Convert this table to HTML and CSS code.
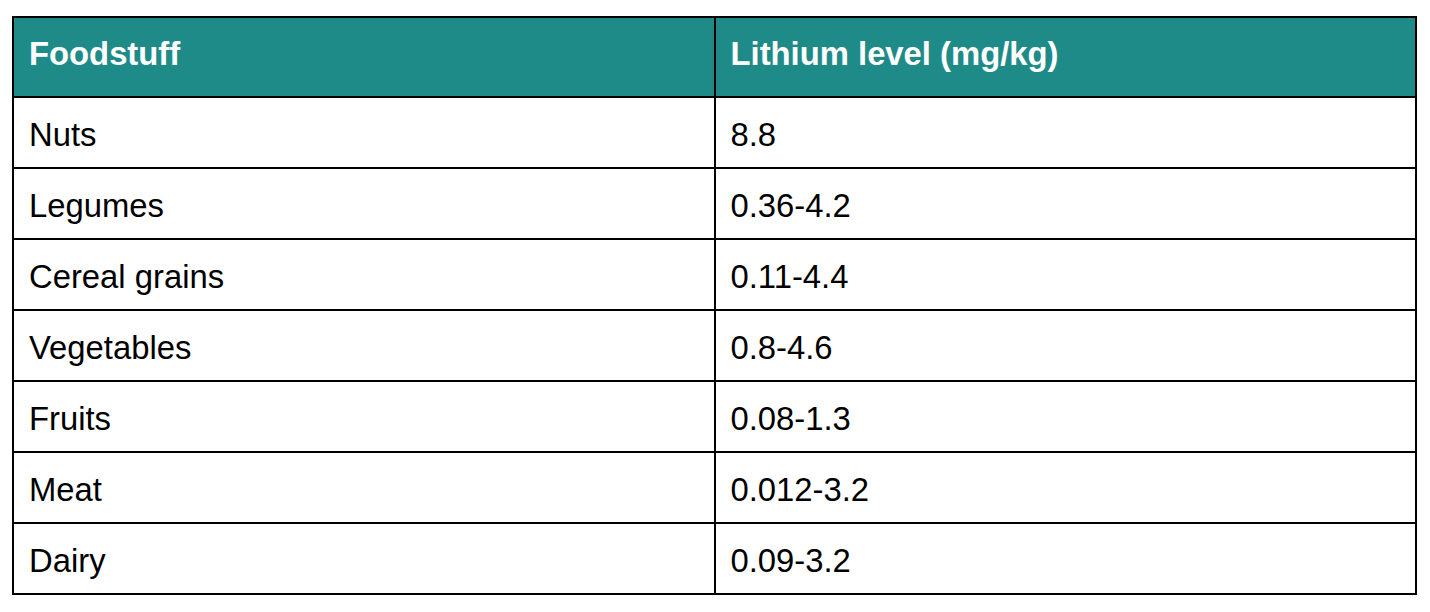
FILE: index.html
```html
<!DOCTYPE html>
<html lang="en">
<head>
    <meta charset="UTF-8">
    <meta name="viewport" content="width=device-width, initial-scale=1.0">
    <title>Lithium levels in food</title>
    <link rel="stylesheet" href="styles.css">
</head>
<body>
    <table class="lithium-table">
        <thead>
            <tr>
                <th>Foodstuff</th>
                <th>Lithium level (mg/kg)</th>
            </tr>
        </thead>
        <tbody>
            <tr><td>Nuts</td><td>8.8</td></tr>
            <tr><td>Legumes</td><td>0.36-4.2</td></tr>
            <tr><td>Cereal grains</td><td>0.11-4.4</td></tr>
            <tr><td>Vegetables</td><td>0.8-4.6</td></tr>
            <tr><td>Fruits</td><td>0.08-1.3</td></tr>
            <tr><td>Meat</td><td>0.012-3.2</td></tr>
            <tr><td>Dairy</td><td>0.09-3.2</td></tr>
        </tbody>
    </table>
</body>
</html>
```

FILE: styles.css
```css
body {
    font-family: 'Liberation Sans', Arial, sans-serif;
    margin: 0;
    padding: 0;
    background: #fff;
    color: #000;
}
.lithium-table {
    border-collapse: collapse;
    margin: 16px 0 0 12px;
    width: 1405px;
    table-layout: fixed;
}
.lithium-table th,
.lithium-table td {
    border: 2px solid #000;
    width: 50%;
    text-align: left;
    font-size: 32.8px;
    line-height: 37px;
    padding: 0 15px;
    vertical-align: middle;
}
.lithium-table th {
    background: #1f8b88;
    color: #fff;
    font-weight: bold;
    height: 80px;
    padding-bottom: 7px;
    box-sizing: border-box;
}
.lithium-table td {
    height: 71px;
    padding-top: 3px;
    box-sizing: border-box;
}
```
